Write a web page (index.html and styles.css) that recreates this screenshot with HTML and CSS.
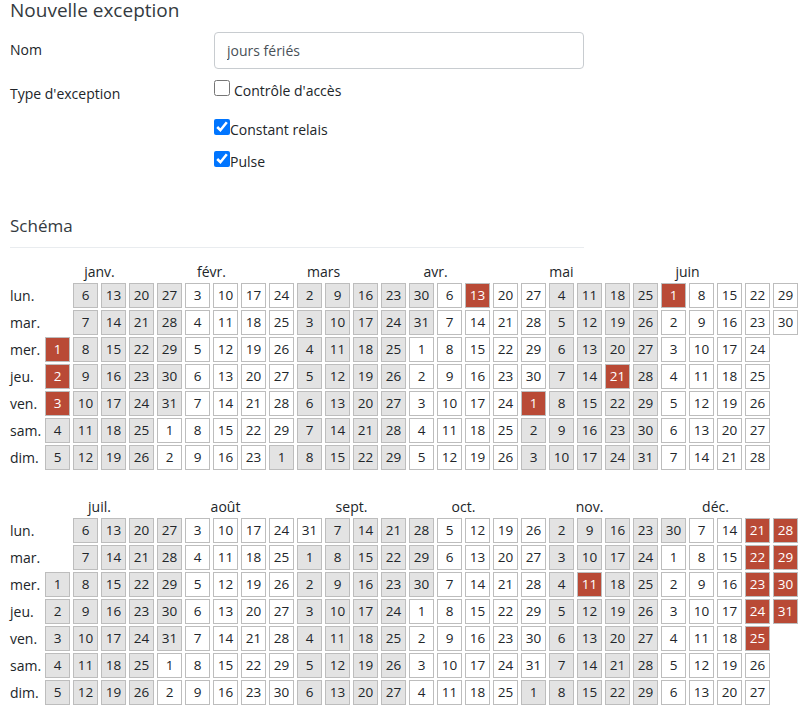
FILE: index.html
```html
<!DOCTYPE html>
<html lang="fr">
<head>
<meta charset="utf-8">
<title>Nouvelle exception</title>
<link rel="stylesheet" href="styles.css">
</head>
<body>
<main class="page">
<section class="form">
<h2 class="title">Nouvelle exception</h2>
<div class="field field-name">
<label class="field-label">Nom</label>
<input class="text-input" type="text" value="jours fériés">
</div>
<div class="field field-type">
<span class="field-label">Type d'exception</span>
<div class="options">
<label class="option option-first"><input type="checkbox"><span class="option-gap">Contrôle d'accès</span></label>
<label class="option"><input type="checkbox" checked><span>Constant relais</span></label>
<label class="option"><input type="checkbox" checked><span>Pulse</span></label>
</div>
</div>
<h2 class="section-title">Schéma</h2>
</section>

<section class="year">
<div class="months">
<span class="month m4">janv.</span><span class="month m4">févr.</span><span class="month m4">mars</span><span class="month m4">avr.</span><span class="month m5">mai</span><span class="month m4">juin</span>
</div>
<div class="days">
<span class="wd">lun.</span><span class="wd">mar.</span><span class="wd">mer.</span><span class="wd">jeu.</span><span class="wd">ven.</span><span class="wd">sam.</span><span class="wd">dim.</span>
<i></i><i></i>
<b class="r">1</b><b class="r">2</b><b class="r">3</b><b class="g">4</b><b class="g">5</b><b class="g">6</b><b class="g">7</b><b class="g">8</b><b class="g">9</b><b class="g">10</b><b class="g">11</b><b class="g">12</b><b class="g">13</b><b class="g">14</b><b class="g">15</b><b class="g">16</b><b class="g">17</b><b class="g">18</b><b class="g">19</b><b class="g">20</b><b class="g">21</b><b class="g">22</b><b class="g">23</b><b class="g">24</b><b class="g">25</b><b class="g">26</b><b class="g">27</b><b class="g">28</b><b class="g">29</b><b class="g">30</b><b class="g">31</b>
<b>1</b><b>2</b><b>3</b><b>4</b><b>5</b><b>6</b><b>7</b><b>8</b><b>9</b><b>10</b><b>11</b><b>12</b><b>13</b><b>14</b><b>15</b><b>16</b><b>17</b><b>18</b><b>19</b><b>20</b><b>21</b><b>22</b><b>23</b><b>24</b><b>25</b><b>26</b><b>27</b><b>28</b><b>29</b>
<b class="g">1</b><b class="g">2</b><b class="g">3</b><b class="g">4</b><b class="g">5</b><b class="g">6</b><b class="g">7</b><b class="g">8</b><b class="g">9</b><b class="g">10</b><b class="g">11</b><b class="g">12</b><b class="g">13</b><b class="g">14</b><b class="g">15</b><b class="g">16</b><b class="g">17</b><b class="g">18</b><b class="g">19</b><b class="g">20</b><b class="g">21</b><b class="g">22</b><b class="g">23</b><b class="g">24</b><b class="g">25</b><b class="g">26</b><b class="g">27</b><b class="g">28</b><b class="g">29</b><b class="g">30</b><b class="g">31</b>
<b>1</b><b>2</b><b>3</b><b>4</b><b>5</b><b>6</b><b>7</b><b>8</b><b>9</b><b>10</b><b>11</b><b>12</b><b class="r">13</b><b>14</b><b>15</b><b>16</b><b>17</b><b>18</b><b>19</b><b>20</b><b>21</b><b>22</b><b>23</b><b>24</b><b>25</b><b>26</b><b>27</b><b>28</b><b>29</b><b>30</b>
<b class="r">1</b><b class="g">2</b><b class="g">3</b><b class="g">4</b><b class="g">5</b><b class="g">6</b><b class="g">7</b><b class="g">8</b><b class="g">9</b><b class="g">10</b><b class="g">11</b><b class="g">12</b><b class="g">13</b><b class="g">14</b><b class="g">15</b><b class="g">16</b><b class="g">17</b><b class="g">18</b><b class="g">19</b><b class="g">20</b><b class="r">21</b><b class="g">22</b><b class="g">23</b><b class="g">24</b><b class="g">25</b><b class="g">26</b><b class="g">27</b><b class="g">28</b><b class="g">29</b><b class="g">30</b><b class="g">31</b>
<b class="r">1</b><b>2</b><b>3</b><b>4</b><b>5</b><b>6</b><b>7</b><b>8</b><b>9</b><b>10</b><b>11</b><b>12</b><b>13</b><b>14</b><b>15</b><b>16</b><b>17</b><b>18</b><b>19</b><b>20</b><b>21</b><b>22</b><b>23</b><b>24</b><b>25</b><b>26</b><b>27</b><b>28</b><b>29</b><b>30</b>
</div>
</section>

<section class="year year-second">
<div class="months">
<span class="month m4">juil.</span><span class="month m5">août</span><span class="month m4">sept.</span><span class="month m4">oct.</span><span class="month m5">nov.</span><span class="month m4">déc.</span>
</div>
<div class="days">
<span class="wd">lun.</span><span class="wd">mar.</span><span class="wd">mer.</span><span class="wd">jeu.</span><span class="wd">ven.</span><span class="wd">sam.</span><span class="wd">dim.</span>
<i></i><i></i>
<b class="g">1</b><b class="g">2</b><b class="g">3</b><b class="g">4</b><b class="g">5</b><b class="g">6</b><b class="g">7</b><b class="g">8</b><b class="g">9</b><b class="g">10</b><b class="g">11</b><b class="g">12</b><b class="g">13</b><b class="g">14</b><b class="g">15</b><b class="g">16</b><b class="g">17</b><b class="g">18</b><b class="g">19</b><b class="g">20</b><b class="g">21</b><b class="g">22</b><b class="g">23</b><b class="g">24</b><b class="g">25</b><b class="g">26</b><b class="g">27</b><b class="g">28</b><b class="g">29</b><b class="g">30</b><b class="g">31</b>
<b>1</b><b>2</b><b>3</b><b>4</b><b>5</b><b>6</b><b>7</b><b>8</b><b>9</b><b>10</b><b>11</b><b>12</b><b>13</b><b>14</b><b>15</b><b>16</b><b>17</b><b>18</b><b>19</b><b>20</b><b>21</b><b>22</b><b>23</b><b>24</b><b>25</b><b>26</b><b>27</b><b>28</b><b>29</b><b>30</b><b>31</b>
<b class="g">1</b><b class="g">2</b><b class="g">3</b><b class="g">4</b><b class="g">5</b><b class="g">6</b><b class="g">7</b><b class="g">8</b><b class="g">9</b><b class="g">10</b><b class="g">11</b><b class="g">12</b><b class="g">13</b><b class="g">14</b><b class="g">15</b><b class="g">16</b><b class="g">17</b><b class="g">18</b><b class="g">19</b><b class="g">20</b><b class="g">21</b><b class="g">22</b><b class="g">23</b><b class="g">24</b><b class="g">25</b><b class="g">26</b><b class="g">27</b><b class="g">28</b><b class="g">29</b><b class="g">30</b>
<b>1</b><b>2</b><b>3</b><b>4</b><b>5</b><b>6</b><b>7</b><b>8</b><b>9</b><b>10</b><b>11</b><b>12</b><b>13</b><b>14</b><b>15</b><b>16</b><b>17</b><b>18</b><b>19</b><b>20</b><b>21</b><b>22</b><b>23</b><b>24</b><b>25</b><b>26</b><b>27</b><b>28</b><b>29</b><b>30</b><b>31</b>
<b class="g">1</b><b class="g">2</b><b class="g">3</b><b class="g">4</b><b class="g">5</b><b class="g">6</b><b class="g">7</b><b class="g">8</b><b class="g">9</b><b class="g">10</b><b class="r">11</b><b class="g">12</b><b class="g">13</b><b class="g">14</b><b class="g">15</b><b class="g">16</b><b class="g">17</b><b class="g">18</b><b class="g">19</b><b class="g">20</b><b class="g">21</b><b class="g">22</b><b class="g">23</b><b class="g">24</b><b class="g">25</b><b class="g">26</b><b class="g">27</b><b class="g">28</b><b class="g">29</b><b class="g">30</b>
<b>1</b><b>2</b><b>3</b><b>4</b><b>5</b><b>6</b><b>7</b><b>8</b><b>9</b><b>10</b><b>11</b><b>12</b><b>13</b><b>14</b><b>15</b><b>16</b><b>17</b><b>18</b><b>19</b><b>20</b><b class="r">21</b><b class="r">22</b><b class="r">23</b><b class="r">24</b><b class="r">25</b><b>26</b><b>27</b><b class="r">28</b><b class="r">29</b><b class="r">30</b><b class="r">31</b>
</div>
</section>
</main>
</body>
</html>
```
FILE: styles.css
```css
* { box-sizing: border-box; }
html, body { margin: 0; padding: 0; background: #fff; }
body {
  font-family: "Open Sans", "Noto Sans", sans-serif;
  font-size: 14px;
  color: #212529;
  height: 709px;
  overflow: hidden;
}
.page { padding: 0 0 0 10px; }
.form { width: 574px; }
.title {
  margin: 0;
  font-size: 19px;
  font-weight: 400;
  line-height: 20px;
  color: #343a40;
}
.field { display: flex; }
.field-label { width: 204px; flex: none; }
.field-name { margin-top: 12px; height: 37px; }
.field-name .field-label { line-height: 36px; }
.text-input {
  width: 370px;
  height: 37px;
  padding: 0 12px;
  border: 1px solid #c8ccd0;
  border-radius: 4px;
  font: inherit;
  color: #495057;
  background: #fff;
}
.field-type { margin-top: 10px; }
.field-type .field-label { line-height: 18px; padding-top: 6px; }
.options { display: flex; flex-direction: column; }
.option { display: flex; align-items: flex-start; height: 16px; line-height: 18px; margin-top: 16px; }
.option span { margin-top: 2px; }
.option-first { margin-top: 1px; margin-bottom: 7px; }
.option input { width: 16px; height: 16px; margin: 0; }
.option .option-gap { margin-left: 4px; }
.section-title {
  margin: 48px 0 0;
  padding-bottom: 10px;
  border-bottom: 1px solid #e9ecef;
  font-size: 17px;
  font-weight: 400;
  line-height: 22px;
  color: #343a40;
}
.year { margin-top: 13px; font-size: 14px; }
.year-second { margin-top: 26px; }
.months {
  display: grid;
  grid-template-columns: repeat(27, 25px);
  column-gap: 3px;
  margin-left: 35px;
  height: 22px;
  line-height: 22px;
}
.month { text-align: center; }
.m4 { grid-column: span 4; }
.m5 { grid-column: span 5; }
.days {
  display: grid;
  grid-auto-flow: column;
  grid-template-rows: repeat(7, 25px);
  grid-template-columns: 32px repeat(27, 25px);
  column-gap: 3px;
  row-gap: 2px;
}
.wd { line-height: 25px; }
.days b {
  display: block;
  font-weight: 400;
  text-align: center;
  line-height: 23px;
  border: 1px solid #bdbdbd;
  background: #fff;
  color: #212529;
  font-size: 13.5px;
}
.days b.g { background: #e3e3e3; }
.days b.r { background: #b94a36; color: #fff; }
```
